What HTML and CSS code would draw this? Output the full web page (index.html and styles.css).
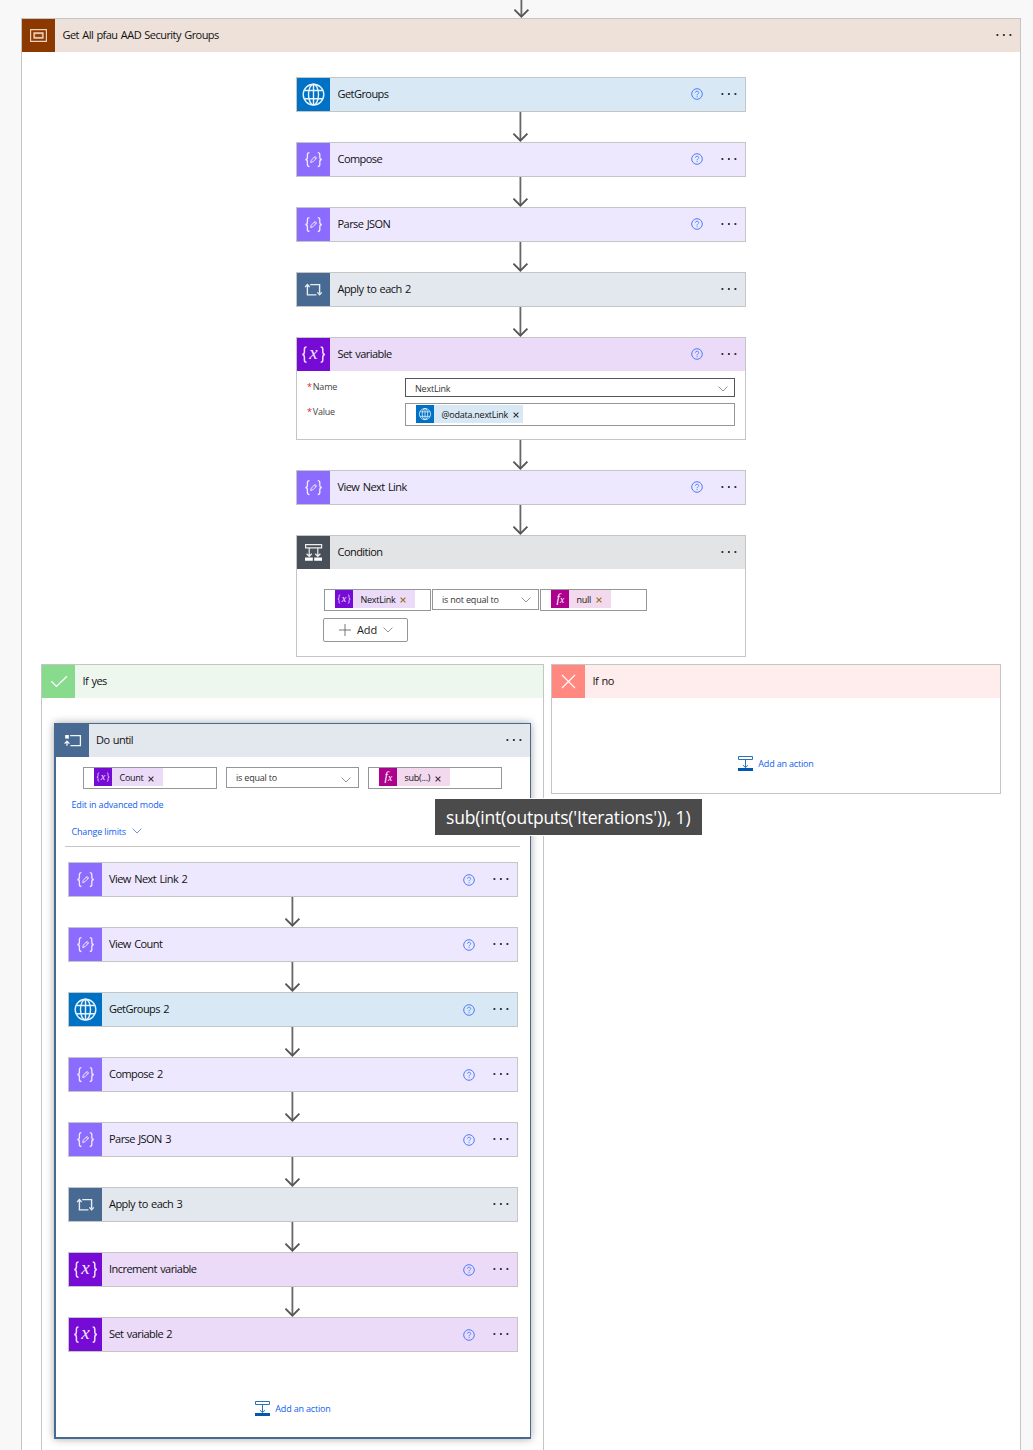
FILE: index.html
```html
<!DOCTYPE html>
<html lang="en">
<head>
<meta charset="utf-8">
<title>Get All pfau AAD Security Groups</title>
<link rel="stylesheet" href="styles.css">
</head>
<body>
<svg class="defs" width="0" height="0">
  <symbol id="arrow" viewBox="0 0 16 30"><path d="M7.4 0V28" stroke="#666" stroke-width="1.8" fill="none"/><path d="M.4 21.6 7.4 28.6 14.4 21.6" stroke="#555" stroke-width="1.9" fill="none"/></symbol>
  <symbol id="dots" viewBox="0 0 18 4"><g fill="#222"><circle cx="2.4" cy="2" r="1.1"/><circle cx="8.9" cy="2" r="1.1"/><circle cx="15.4" cy="2" r="1.1"/></g></symbol>
  <symbol id="help" viewBox="0 0 12 12"><circle cx="6" cy="6" r="5.3" fill="none" stroke="#4a7dfa" stroke-width="1"/><path d="M4.4 4.7C4.4 2.7 7.7 2.7 7.7 4.6 7.7 5.9 6.1 5.8 6.1 7.3M6.1 8.2V9.2" fill="none" stroke="#4a7dfa" stroke-width=".9"/></symbol>
  <symbol id="globe" viewBox="0 0 33 33"><g fill="none" stroke="#e8f4fc" stroke-width="1.4"><circle cx="16.5" cy="16.6" r="10.3"/><ellipse cx="16.5" cy="16.6" rx="5" ry="10.3"/><path d="M16.5 6.3v20.6M7.4 12.5h18.2M7.4 20.8h18.2"/></g></symbol>
  <symbol id="data" viewBox="0 0 33 33"><g fill="none" stroke="#efeaff" stroke-width="1.3"><path d="M12.4 9.6C10.6 9.6 10.4 10.4 10.4 11.7V14.2C10.4 15.7 9.8 16.4 8.4 16.5 9.8 16.6 10.4 17.4 10.4 18.8V21.4C10.4 22.8 10.7 23.5 12.4 23.5M20.8 9.6C22.6 9.6 22.8 10.4 22.8 11.7V14.2C22.8 15.7 23.4 16.4 24.8 16.5 23.4 16.6 22.8 17.4 22.8 18.8V21.4C22.8 22.8 22.5 23.5 20.8 23.5"/><path d="M13.7 19.5 14.3 17.2 18 13.4 19.6 15 15.9 18.8ZM17.2 14.3l1.6 1.6" stroke-width="1"/></g></symbol>
  <symbol id="var" viewBox="0 0 33 33"><g fill="none" stroke="#f0e0ff" stroke-width="1.5"><path d="M9.5 9C7.6 9 7.4 9.8 7.4 11.2V14C7.4 15.7 6.9 16.4 5.3 16.6 6.9 16.8 7.4 17.6 7.4 19.2V22C7.4 23.5 7.7 24.3 9.5 24.3M23.7 9C25.6 9 25.8 9.8 25.8 11.2V14C25.8 15.7 26.3 16.4 27.9 16.6 26.3 16.8 25.8 17.6 25.8 19.2V22C25.8 23.5 25.5 24.3 23.7 24.3"/></g><text class="glyph" x="12.2" y="21.2" font-size="19">x</text></symbol>
  <symbol id="fx" viewBox="0 0 18 18"><text class="glyph bright" x="5.4" y="12.2" font-size="12.5">f</text><text class="glyph bright" x="8.9" y="13.2" font-size="9.5">x</text></symbol>
  <symbol id="loop" viewBox="0 0 33 33"><g fill="none" stroke="#e8eef5" stroke-width="1.4"><path d="M13.2 11.6H22.6V20.6M19.4 21.9H10.4V12.6"/><path d="M8.2 14 10.4 11.6 12.6 14M20.4 19.4 22.6 21.8 24.8 19.4"/></g></symbol>
  <symbol id="until" viewBox="0 0 33 33"><g fill="none" stroke="#f0f4f8" stroke-width="1.3"><path d="M14.2 11.7H24.4V21.6H14.5M11 21.8V17.3M8.6 19.6 11 17.2 13.4 19.6"/></g><path fill="#fff" d="M9.2 11h3.6v3.6H9.2z"/></symbol>
  <symbol id="cond" viewBox="0 0 33 33"><g fill="none" stroke="#eee" stroke-width="1.2"><path d="M8.6 8.6H24.6V11.8H8.6ZM12.2 12V20M20.8 12V20M9.6 17.8 12.2 20.3 14.8 17.8M18.2 17.8 20.8 20.3 23.4 17.8"/></g><path fill="#fff" d="M8 21.5h7.8v3.3H8zM17.2 21.5H25v3.3h-7.8z"/></symbol>
  <symbol id="scope" viewBox="0 0 33 33"><path d="M8.6 10.6H24.4V22.4H8.6Z" fill="none" stroke="#eed2bf" stroke-width="1.2"/><path d="M12 14H21V19H12Z" fill="#c08a66" stroke="#eed2bf" stroke-width="1.3"/><path d="M13.2 15.2h6.6v2.6h-6.6z" fill="#8c3900"/></symbol>
  <symbol id="check" viewBox="0 0 33 33"><path d="M9.3 16.2 14.4 21.4 25 11.2" fill="none" stroke="#fff" stroke-width="1.3"/></symbol>
  <symbol id="cross" viewBox="0 0 33 33"><path d="M10 10 23 23M23 10 10 23" fill="none" stroke="#fff" stroke-width="1.1"/></symbol>
  <symbol id="chev" viewBox="0 0 10 6"><path d="M.6.6 5 5 9.4.6" fill="none" stroke="currentColor" stroke-width=".9"/></symbol>
  <symbol id="plus" viewBox="0 0 12 12"><path d="M6 0V12M0 6H12" fill="none" stroke="#666" stroke-width=".9"/></symbol>
  <symbol id="x" viewBox="0 0 6 6"><path d="M.6.6 5.4 5.4M5.4.6.6 5.4" fill="none" stroke="currentColor" stroke-width="1.1"/></symbol>
  <symbol id="insert" viewBox="0 0 15 15"><path d="M.5.5H14.5V3.5H.5ZM7.5 3.5V11.5M5 9.2 7.5 11.6 10 9.2" fill="none" stroke="#2a72b8"/><path fill="#0059b0" d="M0 12h15v3H0z"/></symbol>
</svg>

<main class="page">
  <svg class="arrow lead"><use href="#arrow"/></svg>
  <section class="scope">
    <header class="head t-scope"><svg class="icon"><use href="#scope"/></svg><h1 class="title wide">Get All pfau AAD Security Groups</h1><svg class="dots"><use href="#dots"/></svg></header>

    <div class="flow">
      <div class="card"><header class="head t-http"><svg class="icon"><use href="#globe"/></svg><span class="title">GetGroups</span><svg class="help"><use href="#help"/></svg><svg class="dots"><use href="#dots"/></svg></header></div>
      <svg class="arrow"><use href="#arrow"/></svg>
      <div class="card"><header class="head t-data"><svg class="icon"><use href="#data"/></svg><span class="title">Compose</span><svg class="help"><use href="#help"/></svg><svg class="dots"><use href="#dots"/></svg></header></div>
      <svg class="arrow"><use href="#arrow"/></svg>
      <div class="card"><header class="head t-data"><svg class="icon"><use href="#data"/></svg><span class="title">Parse JSON</span><svg class="help"><use href="#help"/></svg><svg class="dots"><use href="#dots"/></svg></header></div>
      <svg class="arrow"><use href="#arrow"/></svg>
      <div class="card"><header class="head t-ctrl"><svg class="icon"><use href="#loop"/></svg><span class="title">Apply to each 2</span><svg class="dots"><use href="#dots"/></svg></header></div>
      <svg class="arrow"><use href="#arrow"/></svg>
      <div class="card">
        <header class="head t-var"><svg class="icon"><use href="#var"/></svg><span class="title">Set variable</span><svg class="help"><use href="#help"/></svg><svg class="dots"><use href="#dots"/></svg></header>
        <div class="form">
          <label class="label"><i>*</i>Name</label>
          <div class="field name-field"><span>NextLink</span><svg class="chev"><use href="#chev"/></svg></div>
          <label class="label"><i>*</i>Value</label>
          <div class="field value-field"><span class="token k-http"><svg class="tico"><use href="#globe"/></svg><span class="ttext">@odata.nextLink</span><svg class="tx"><use href="#x"/></svg></span></div>
        </div>
      </div>
      <svg class="arrow"><use href="#arrow"/></svg>
      <div class="card"><header class="head t-data"><svg class="icon"><use href="#data"/></svg><span class="title">View Next Link</span><svg class="help"><use href="#help"/></svg><svg class="dots"><use href="#dots"/></svg></header></div>
      <svg class="arrow"><use href="#arrow"/></svg>
      <div class="card">
        <header class="head t-cond"><svg class="icon"><use href="#cond"/></svg><span class="title">Condition</span><svg class="dots"><use href="#dots"/></svg></header>
        <div class="cond">
          <div class="row">
            <div class="field"><span class="token k-var w80"><svg class="tico"><use href="#var"/></svg><span class="ttext">NextLink</span><svg class="tx gold"><use href="#x"/></svg></span></div>
            <div class="field select"><span>is not equal to</span><svg class="chev"><use href="#chev"/></svg></div>
            <div class="field"><span class="token k-fx w60"><svg class="tico"><use href="#fx"/></svg><span class="ttext">null</span><svg class="tx gold"><use href="#x"/></svg></span></div>
          </div>
          <button class="add"><svg class="plus"><use href="#plus"/></svg>Add<svg class="chev"><use href="#chev"/></svg></button>
        </div>
      </div>
    </div>

    <div class="branches">
      <section class="branch yes">
        <header class="head t-yes"><svg class="icon"><use href="#check"/></svg><span class="title">If yes</span></header>
        <div class="until">
          <header class="head t-ctrl"><svg class="icon"><use href="#until"/></svg><span class="title">Do until</span><svg class="dots"><use href="#dots"/></svg></header>
          <div class="row">
            <div class="field"><span class="token k-var w69"><svg class="tico"><use href="#var"/></svg><span class="ttext">Count</span><svg class="tx low"><use href="#x"/></svg></span></div>
            <div class="field select"><span>is equal to</span><svg class="chev low"><use href="#chev"/></svg></div>
            <div class="field">
              <span class="token k-fx w71"><svg class="tico"><use href="#fx"/></svg><span class="ttext">sub(...)</span><svg class="tx low"><use href="#x"/></svg></span>
              <div class="tooltip"><span>sub(int(outputs('Iterations')), 1)</span></div>
            </div>
          </div>
          <a class="link edit">Edit in advanced mode</a>
          <a class="link limits">Change limits<svg class="chev"><use href="#chev"/></svg></a>
          <hr class="rule">
          <div class="flow inner">
            <div class="card"><header class="head t-data"><svg class="icon"><use href="#data"/></svg><span class="title">View Next Link 2</span><svg class="help"><use href="#help"/></svg><svg class="dots"><use href="#dots"/></svg></header></div>
            <svg class="arrow"><use href="#arrow"/></svg>
            <div class="card"><header class="head t-data"><svg class="icon"><use href="#data"/></svg><span class="title">View Count</span><svg class="help"><use href="#help"/></svg><svg class="dots"><use href="#dots"/></svg></header></div>
            <svg class="arrow"><use href="#arrow"/></svg>
            <div class="card"><header class="head t-http"><svg class="icon"><use href="#globe"/></svg><span class="title">GetGroups 2</span><svg class="help"><use href="#help"/></svg><svg class="dots"><use href="#dots"/></svg></header></div>
            <svg class="arrow"><use href="#arrow"/></svg>
            <div class="card"><header class="head t-data"><svg class="icon"><use href="#data"/></svg><span class="title">Compose 2</span><svg class="help"><use href="#help"/></svg><svg class="dots"><use href="#dots"/></svg></header></div>
            <svg class="arrow"><use href="#arrow"/></svg>
            <div class="card"><header class="head t-data"><svg class="icon"><use href="#data"/></svg><span class="title">Parse JSON 3</span><svg class="help"><use href="#help"/></svg><svg class="dots"><use href="#dots"/></svg></header></div>
            <svg class="arrow"><use href="#arrow"/></svg>
            <div class="card"><header class="head t-ctrl"><svg class="icon"><use href="#loop"/></svg><span class="title">Apply to each 3</span><svg class="dots"><use href="#dots"/></svg></header></div>
            <svg class="arrow"><use href="#arrow"/></svg>
            <div class="card"><header class="head t-var"><svg class="icon"><use href="#var"/></svg><span class="title">Increment variable</span><svg class="help"><use href="#help"/></svg><svg class="dots"><use href="#dots"/></svg></header></div>
            <svg class="arrow"><use href="#arrow"/></svg>
            <div class="card"><header class="head t-var"><svg class="icon"><use href="#var"/></svg><span class="title">Set variable 2</span><svg class="help"><use href="#help"/></svg><svg class="dots"><use href="#dots"/></svg></header></div>
          </div>
          <a class="link action"><svg class="insert"><use href="#insert"/></svg>Add an action</a>
        </div>
      </section>
      <section class="branch no">
        <header class="head t-no"><svg class="icon"><use href="#cross"/></svg><span class="title">If no</span></header>
        <a class="link action"><svg class="insert"><use href="#insert"/></svg>Add an action</a>
      </section>
    </div>
  </section>
</main>
</body>
</html>
```
FILE: styles.css
```css
* { box-sizing: border-box; }
html, body { margin: 0; overflow: hidden; }
body { background: #f8f8f8; color: #111; font: 11px/15px "Open Sans", "Noto Sans", sans-serif; }
svg { display: block; flex: none; }
.defs { position: absolute; }
.glyph { font-family: "Liberation Serif", serif; font-style: italic; fill: #f3e6ff; }
.bright { fill: #fff; }

.page { height: 1450px; padding: 0 12px 0 21px; overflow: hidden; display: flex; flex-direction: column; }
.arrow { width: 16px; height: 30px; align-self: center; }
.lead { margin: -12px 0 0 2px; flex: none; }
.scope { flex: none; width: 1000px; height: 1500px; border: 1px solid #c5c5c5; background: #fff; }

.head { display: flex; align-items: center; height: 33px; }
.icon { width: 33px; height: 33px; }
.title { flex: 1; margin: 0; padding-left: 7.5px; font-size: 11px; font-weight: 400; line-height: 31px; height: 33px; letter-spacing: -.55px; word-spacing: 1px; white-space: nowrap; }
.dots { width: 18px; height: 4px; margin: 0 7px 2px 0; }
.help { width: 12px; height: 12px; margin: 0 17px 1px 0; }

.t-scope { background: #eee1da; } .t-scope .icon { background: #8c3900; }
.t-http { background: #d8e9f5; } .t-http .icon { background: #0072c6; }
.t-data { background: #eee8ff; } .t-data .icon { background: #8c6cff; }
.t-ctrl { background: #e3e8ef; } .t-ctrl .icon { background: #486991; }
.t-var { background: #ebdbf8; } .t-var .icon { background: #770bd6; }
.t-cond { background: #e3e4e5; } .t-cond .icon { background: #484f58; }
.t-yes { background: #edf7ee; } .t-yes .icon { background: #88da8d; }
.t-no { background: #ffecec; } .t-no .icon { background: #ff8880; }

.flow { display: flex; flex-direction: column; align-items: center; padding-top: 25px; }
.card { width: 450px; border: 1px solid #c5c5c5; background: #fff; }

.field { display: flex; align-items: flex-start; border: 1px solid #969696; background: #fff; font-size: 9px; letter-spacing: -.2px; color: #333; white-space: nowrap; }
.chev { width: 10px; height: 6px; color: #888; }
.form { display: grid; grid-template-columns: 98px 330px; align-content: start; row-gap: 6px; padding: 7px 0 0 10px; height: 68px; }
.label { font-size: 9px; line-height: 17px; letter-spacing: -.2px; color: #444; }
.label i { font-style: normal; color: #e0202c; margin-right: 1px; }
.name-field { height: 19px; align-items: center; border-color: #555; padding: 2px 6px 0 9px; justify-content: space-between; }
.value-field { height: 23px; padding: 1px 0 0 10px; }

.token { display: flex; align-items: center; width: 107px; height: 18px; color: #111; }
.tico { width: 18px; height: 18px; margin-right: 7.5px; }
.ttext { letter-spacing: -.25px; }
.tx { width: 6px; height: 6px; margin: 1px 0 0 4.5px; color: #333; }
.tx.low { margin-top: 4px; }
.gold { color: #9a6a20; }
.k-http { background: #d8e9f5; } .k-http .tico { background: #0072c6; }
.k-var { background: #ebdbf8; } .k-var .tico { background: #770bd6; }
.k-fx { background: #f2d9ee; } .k-fx .tico { background: #ad008c; }
.w80 { width: 80px; } .w60 { width: 60px; } .w69 { width: 69px; } .w71 { width: 71px; }

.row { display: flex; align-items: flex-start; }
.row .field { position: relative; height: 22px; padding-left: 10px; }
.row .select { height: 21px; align-items: center; justify-content: space-between; padding: 0 7px 0 9px; }
.chev.low { margin-top: 4px; }
.cond { height: 87px; padding: 20px 0 0 27px; }
.cond .row { gap: 1px; }
.cond .field { width: 107px; }
.add { display: flex; align-items: center; width: 85px; height: 24px; margin: 7px 0 0 -1px; padding: 0 0 0 15px; border: 1px solid #969696; border-radius: 2px; background: #fff; font: 11px/22px "Open Sans", sans-serif; letter-spacing: -.1px; color: #222; }
.plus { width: 12px; height: 12px; margin-right: 6px; }
.add .chev { margin-left: 6px; }

.branches { display: flex; align-items: flex-start; gap: 7px; padding: 7px 0 0 19px; }
.branch { border: 1px solid #c5c5c5; background: #fff; }
.yes { width: 503px; height: 850px; padding-bottom: 20px; }
.no { width: 450px; height: 130px; }
.no .action { margin-top: 58px; }

.until { width: 477px; height: 716px; margin: 25px 0 0 12px; border: solid #486991; border-width: 1px 1px 2px 2px; background: #fff; box-shadow: 0 0 8px rgba(0, 0, 0, .35); }
.until > .head .title { padding-left: 7px; }
.until .head .dots { margin-bottom: 1px; }
.until .head .help { margin-bottom: 0; }
.until .inner .title { padding-left: 7px; }
.until .row { gap: 9px; padding: 10px 0 0 27px; }
.until .row .field { width: 134px; }
.until .row .select { width: 133px; }
.link { display: flex; align-items: center; font-size: 9px; letter-spacing: -.17px; color: #1160f0; white-space: nowrap; }
.edit { margin: 8px 0 0 15.5px; }
.limits { margin: 12px 0 0 15.5px; }
.limits .chev { margin: -2px 0 0 6px; color: #5b8be0; }
.rule { height: 1px; margin: 7px 10px 0 9px; border: 0; background: #c5c5c5; }
.inner { width: 450px; margin-left: 12px; padding-top: 15px; }
.action { justify-content: center; height: 15px; }
.until .action { margin: 49px 0 0; }
.insert { width: 15px; height: 15px; margin-right: 5px; }

.tooltip { position: absolute; z-index: 2; left: 65px; top: 30px; width: 269px; height: 38px; border: 1px solid #fff; background: #4b4b4b; color: #fff; font-size: 17.5px; line-height: 37px; letter-spacing: -.18px; padding-left: 11px; }
```
